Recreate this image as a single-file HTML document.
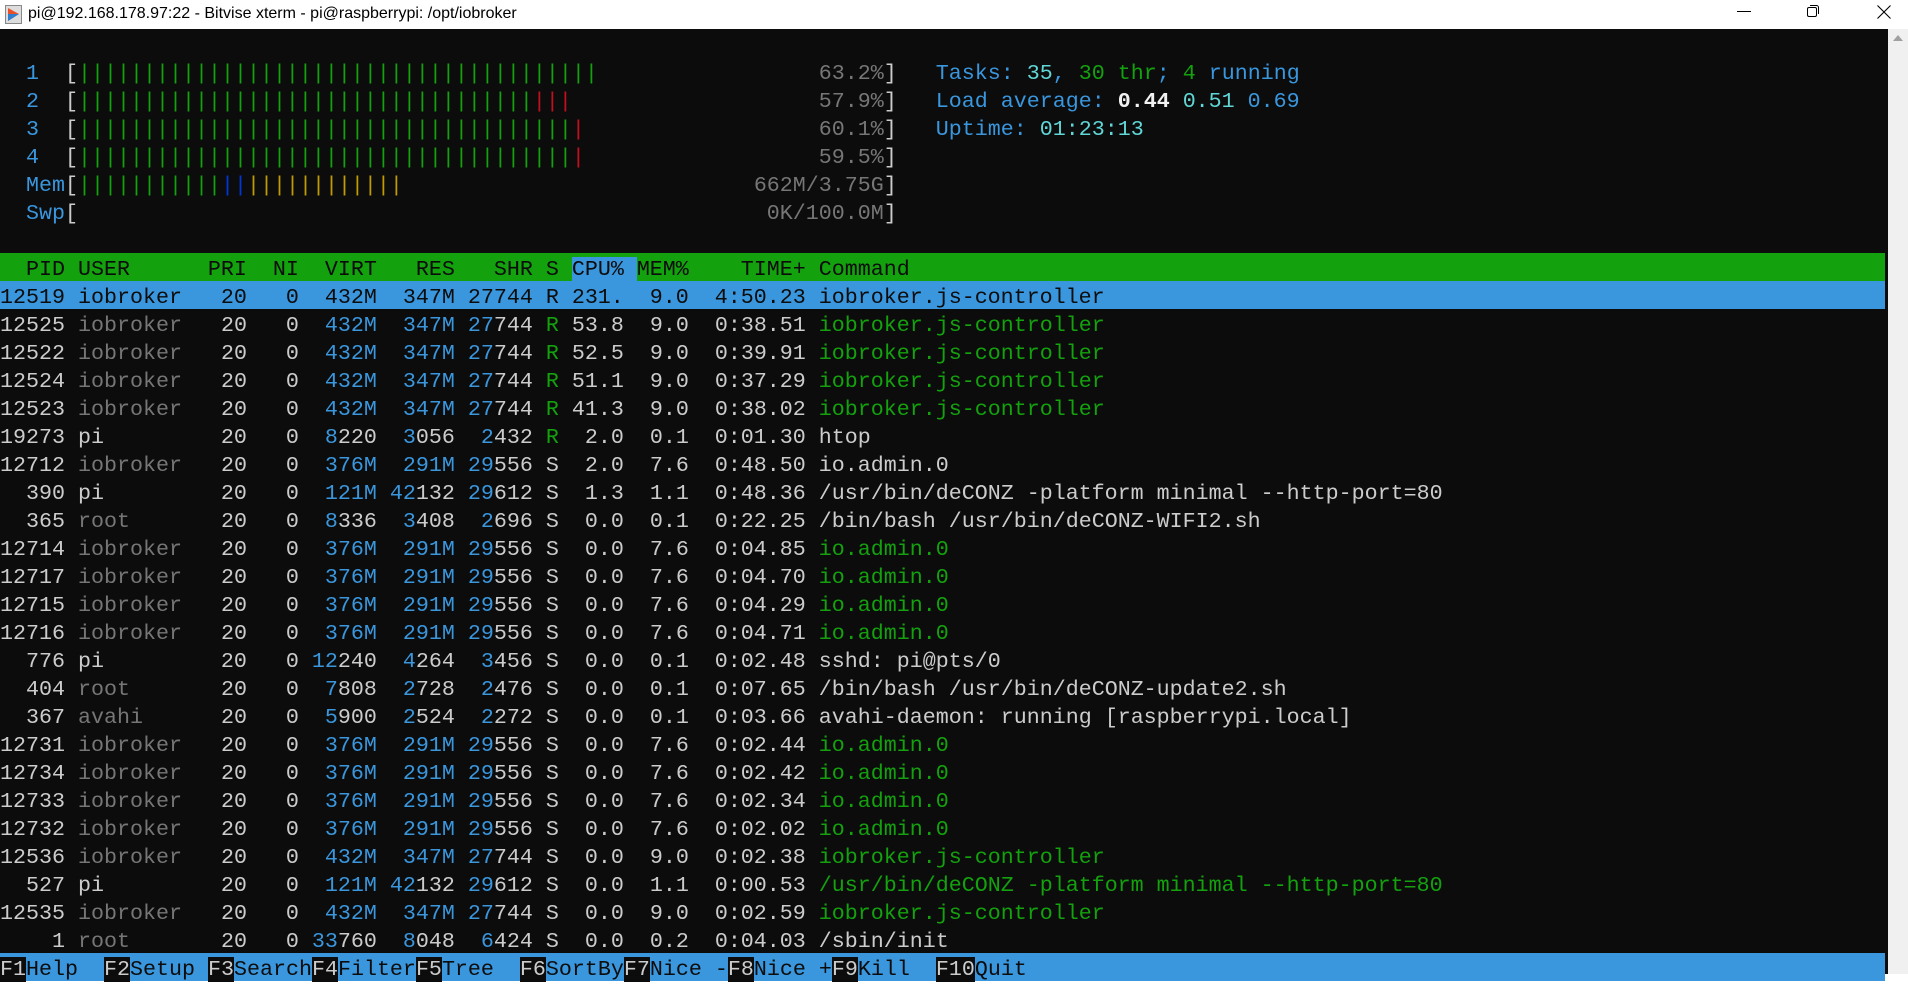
<!DOCTYPE html>
<html><head><meta charset="utf-8">
<style>
html,body{margin:0;padding:0;width:1908px;height:974px;overflow:hidden;background:#fff;}
#title{position:absolute;left:0;top:0;width:1908px;height:29px;background:#fff;font-family:"Liberation Sans",sans-serif;font-size:16px;color:#000;}
#title .t{position:absolute;left:28px;top:5px;}
#term{position:absolute;left:0;top:29px;width:1888px;height:945px;background:#0c0c0c;}
#sb{position:absolute;left:1888px;top:29px;width:20px;height:945px;background:#f0f0f0;}
.l{position:absolute;left:0;height:25px;padding-top:3px;width:1885px;white-space:pre;font-family:"Liberation Mono",monospace;font-size:21.67px;line-height:28px;color:#cccccc;}
.b{color:#3a96dd}.c{color:#61d6d6}.g{color:#13a10e}.d{color:#767676}.r{color:#c50f1f}.y{color:#c19c00}.k{color:#0037da}.wb{color:#f2f2f2;font-weight:bold}
.hd{background:#13a10e;color:#0c0c0c}
.hl{background:#3a96dd;color:#0c0c0c}
.cb{background:#3a96dd;color:#0c0c0c}
.fk{background:#3a96dd}
</style></head><body>
<div id="title">
<svg style="position:absolute;left:5px;top:5px" width="17" height="19" viewBox="0 0 17 19"><rect x="0.5" y="0.5" width="16" height="18" fill="#ddd" stroke="#888"/><polygon points="3,3 14,9 3,16" fill="#e8512a"/><polygon points="3,9 14,9 3,16" fill="#2f7fd0"/></svg>
<span class="t">pi@192.168.178.97:22 - Bitvise xterm - pi@raspberrypi: /opt/iobroker</span>
<div style="position:absolute;left:1737px;top:11px;width:14px;height:1px;background:#000"></div>
<svg style="position:absolute;left:1806px;top:4px" width="14" height="14" viewBox="0 0 14 14"><rect x="1.5" y="3.5" width="9" height="9" rx="1.5" fill="none" stroke="#000"/><path d="M4 1.5h6.5a2 2 0 0 1 2 2V10" fill="none" stroke="#000"/></svg>
<svg style="position:absolute;left:1877px;top:5px" width="14" height="14" viewBox="0 0 14 14"><path d="M0.5 0.5L13.5 13.5M13.5 0.5L0.5 13.5" stroke="#000" stroke-width="1.1"/></svg>
</div>
<div id="term"></div>
<div id="sb"><svg style="position:absolute;left:3px;top:4px" width="14" height="10" viewBox="0 0 14 10"><polygon points="7,2 12,8 2,8" fill="#a0a0a0"/></svg></div>

<div class="l" style="top:57px">  <span class="b">1</span>  [<span class="g">||||||||||||||||||||||||||||||||||||||||</span>                 <span class="d">63.2%</span>]   <span class="b">Tasks: </span><span class="c">35</span><span class="b">, </span><span class="g">30 thr</span><span class="b">; </span><span class="g">4</span><span class="b"> running</span></div>
<div class="l" style="top:85px">  <span class="b">2</span>  [<span class="g">|||||||||||||||||||||||||||||||||||</span><span class="r">|||</span>                   <span class="d">57.9%</span>]   <span class="b">Load average: </span><span class="wb">0.44</span> <span class="c">0.51</span> <span class="b">0.69</span></div>
<div class="l" style="top:113px">  <span class="b">3</span>  [<span class="g">||||||||||||||||||||||||||||||||||||||</span><span class="r">|</span>                  <span class="d">60.1%</span>]   <span class="b">Uptime: </span><span class="c">01:23:13</span></div>
<div class="l" style="top:141px">  <span class="b">4</span>  [<span class="g">||||||||||||||||||||||||||||||||||||||</span><span class="r">|</span>                  <span class="d">59.5%</span>]</div>
<div class="l" style="top:169px">  <span class="b">Mem</span>[<span class="g">|||||||||||</span><span class="k">||</span><span class="y">||||||||||||</span>                           <span class="d">662M/3.75G</span>]</div>
<div class="l" style="top:197px">  <span class="b">Swp</span>[                                                     <span class="d">0K/100.0M</span>]</div>

<div class="l hd" style="top:253px">  PID USER      PRI  NI  VIRT   RES   SHR S <span class="cb">CPU% </span>MEM%    TIME+ Command</div>
<div class="l hl" style="top:281px">12519 iobroker   20   0  432M  347M 27744 R 231.  9.0  4:50.23 iobroker.js-controller</div>
<div class="l" style="top:309px">12525 <span class="d">iobroker </span>  20   0  <span class="b">432M</span>  <span class="b">347M</span> <span class="b">27</span>744 <span class="g">R</span> 53.8  9.0  0:38.51 <span class="g">iobroker.js-controller</span></div>
<div class="l" style="top:337px">12522 <span class="d">iobroker </span>  20   0  <span class="b">432M</span>  <span class="b">347M</span> <span class="b">27</span>744 <span class="g">R</span> 52.5  9.0  0:39.91 <span class="g">iobroker.js-controller</span></div>
<div class="l" style="top:365px">12524 <span class="d">iobroker </span>  20   0  <span class="b">432M</span>  <span class="b">347M</span> <span class="b">27</span>744 <span class="g">R</span> 51.1  9.0  0:37.29 <span class="g">iobroker.js-controller</span></div>
<div class="l" style="top:393px">12523 <span class="d">iobroker </span>  20   0  <span class="b">432M</span>  <span class="b">347M</span> <span class="b">27</span>744 <span class="g">R</span> 41.3  9.0  0:38.02 <span class="g">iobroker.js-controller</span></div>
<div class="l" style="top:421px">19273 pi         20   0  <span class="b">8</span>220  <span class="b">3</span>056  <span class="b">2</span>432 <span class="g">R</span>  2.0  0.1  0:01.30 htop</div>
<div class="l" style="top:449px">12712 <span class="d">iobroker </span>  20   0  <span class="b">376M</span>  <span class="b">291M</span> <span class="b">29</span>556 S  2.0  7.6  0:48.50 io.admin.0</div>
<div class="l" style="top:477px">  390 pi         20   0  <span class="b">121M</span> <span class="b">42</span>132 <span class="b">29</span>612 S  1.3  1.1  0:48.36 /usr/bin/deCONZ -platform minimal --http-port=80</div>
<div class="l" style="top:505px">  365 <span class="d">root     </span>  20   0  <span class="b">8</span>336  <span class="b">3</span>408  <span class="b">2</span>696 S  0.0  0.1  0:22.25 /bin/bash /usr/bin/deCONZ-WIFI2.sh</div>
<div class="l" style="top:533px">12714 <span class="d">iobroker </span>  20   0  <span class="b">376M</span>  <span class="b">291M</span> <span class="b">29</span>556 S  0.0  7.6  0:04.85 <span class="g">io.admin.0</span></div>
<div class="l" style="top:561px">12717 <span class="d">iobroker </span>  20   0  <span class="b">376M</span>  <span class="b">291M</span> <span class="b">29</span>556 S  0.0  7.6  0:04.70 <span class="g">io.admin.0</span></div>
<div class="l" style="top:589px">12715 <span class="d">iobroker </span>  20   0  <span class="b">376M</span>  <span class="b">291M</span> <span class="b">29</span>556 S  0.0  7.6  0:04.29 <span class="g">io.admin.0</span></div>
<div class="l" style="top:617px">12716 <span class="d">iobroker </span>  20   0  <span class="b">376M</span>  <span class="b">291M</span> <span class="b">29</span>556 S  0.0  7.6  0:04.71 <span class="g">io.admin.0</span></div>
<div class="l" style="top:645px">  776 pi         20   0 <span class="b">12</span>240  <span class="b">4</span>264  <span class="b">3</span>456 S  0.0  0.1  0:02.48 sshd: pi@pts/0</div>
<div class="l" style="top:673px">  404 <span class="d">root     </span>  20   0  <span class="b">7</span>808  <span class="b">2</span>728  <span class="b">2</span>476 S  0.0  0.1  0:07.65 /bin/bash /usr/bin/deCONZ-update2.sh</div>
<div class="l" style="top:701px">  367 <span class="d">avahi    </span>  20   0  <span class="b">5</span>900  <span class="b">2</span>524  <span class="b">2</span>272 S  0.0  0.1  0:03.66 avahi-daemon: running [raspberrypi.local]</div>
<div class="l" style="top:729px">12731 <span class="d">iobroker </span>  20   0  <span class="b">376M</span>  <span class="b">291M</span> <span class="b">29</span>556 S  0.0  7.6  0:02.44 <span class="g">io.admin.0</span></div>
<div class="l" style="top:757px">12734 <span class="d">iobroker </span>  20   0  <span class="b">376M</span>  <span class="b">291M</span> <span class="b">29</span>556 S  0.0  7.6  0:02.42 <span class="g">io.admin.0</span></div>
<div class="l" style="top:785px">12733 <span class="d">iobroker </span>  20   0  <span class="b">376M</span>  <span class="b">291M</span> <span class="b">29</span>556 S  0.0  7.6  0:02.34 <span class="g">io.admin.0</span></div>
<div class="l" style="top:813px">12732 <span class="d">iobroker </span>  20   0  <span class="b">376M</span>  <span class="b">291M</span> <span class="b">29</span>556 S  0.0  7.6  0:02.02 <span class="g">io.admin.0</span></div>
<div class="l" style="top:841px">12536 <span class="d">iobroker </span>  20   0  <span class="b">432M</span>  <span class="b">347M</span> <span class="b">27</span>744 S  0.0  9.0  0:02.38 <span class="g">iobroker.js-controller</span></div>
<div class="l" style="top:869px">  527 pi         20   0  <span class="b">121M</span> <span class="b">42</span>132 <span class="b">29</span>612 S  0.0  1.1  0:00.53 <span class="g">/usr/bin/deCONZ -platform minimal --http-port=80</span></div>
<div class="l" style="top:897px">12535 <span class="d">iobroker </span>  20   0  <span class="b">432M</span>  <span class="b">347M</span> <span class="b">27</span>744 S  0.0  9.0  0:02.59 <span class="g">iobroker.js-controller</span></div>
<div class="l" style="top:925px">    1 <span class="d">root     </span>  20   0 <span class="b">33</span>760  <span class="b">8</span>048  <span class="b">6</span>424 S  0.0  0.2  0:04.03 /sbin/init</div>
<div class="l fk" style="top:953px"><span style="background:#0c0c0c;color:#cccccc">F1</span><span style="color:#0c0c0c">Help  </span><span style="background:#0c0c0c;color:#cccccc">F2</span><span style="color:#0c0c0c">Setup </span><span style="background:#0c0c0c;color:#cccccc">F3</span><span style="color:#0c0c0c">Search</span><span style="background:#0c0c0c;color:#cccccc">F4</span><span style="color:#0c0c0c">Filter</span><span style="background:#0c0c0c;color:#cccccc">F5</span><span style="color:#0c0c0c">Tree  </span><span style="background:#0c0c0c;color:#cccccc">F6</span><span style="color:#0c0c0c">SortBy</span><span style="background:#0c0c0c;color:#cccccc">F7</span><span style="color:#0c0c0c">Nice -</span><span style="background:#0c0c0c;color:#cccccc">F8</span><span style="color:#0c0c0c">Nice +</span><span style="background:#0c0c0c;color:#cccccc">F9</span><span style="color:#0c0c0c">Kill  </span><span style="background:#0c0c0c;color:#cccccc">F10</span><span style="color:#0c0c0c">Quit</span></div>
</body></html>
